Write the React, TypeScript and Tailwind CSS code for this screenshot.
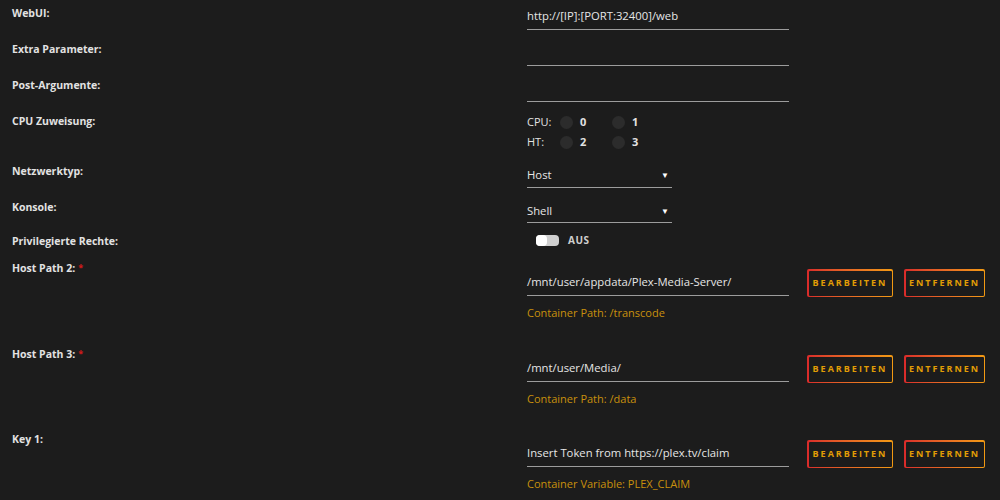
import React from 'react';

const font = { fontFamily: '"Open Sans", "Noto Sans", sans-serif' };

const Label = ({ text, required }: { text: string; required?: boolean }) => (
  <div className="w-[527px] shrink-0 pl-3 pt-[5px] text-[10.5px] leading-4 font-bold text-[#e2e2e2]">
    {text}
    {required && <span className="ml-[3px] align-top text-[9px] text-[#d01a1a]">*</span>}
  </div>
);

const TextRow = ({ label, value }: { label: string; value?: string }) => (
  <div className="flex h-[36px]">
    <Label text={label} />
    <div className="w-[262px] pt-[8px] pb-[5px] border-b border-[#9c9c9c] text-[11.3px] leading-4 text-[#e6e6e6] h-[30px]">
      {value}
    </div>
  </div>
);

const SelectRow = ({ label, value, h, pb }: { label: string; value: string; h: string; pb: string }) => (
  <div className={`flex ${h}`}>
    <Label text={label} />
    <div
      className={`flex w-[145px] h-fit items-center justify-between pt-[9px] ${pb} border-b border-[#9c9c9c] text-[11.3px] leading-4 text-[#e6e6e6]`}
    >
      <span>{value}</span>
      <span className="mr-[3px] text-[8px] text-white">▼</span>
    </div>
  </div>
);

const Radio = ({ n }: { n: string }) => (
  <div className="flex items-center">
    <span className="h-[13px] w-[13px] rounded-full bg-[#2c2c2c]" />
    <span className="ml-[7px] text-[11px] font-bold text-[#e2e2e2]">{n}</span>
  </div>
);

const GradButton = ({ text, w }: { text: string; w: string }) => (
  <div className={`${w} h-[28px] p-[1.5px] rounded-[2px] bg-gradient-to-r from-[#d92a2a] to-[#f29a12]`}>
    <div className="flex h-full w-full items-center justify-center rounded-[1px] bg-[#1c1c1c] text-[9px] font-bold tracking-[2px] text-[#e19d05]">
      {text}
    </div>
  </div>
);

const PathRow = ({
  label,
  value,
  note,
  required,
  h,
}: {
  label: string;
  value: string;
  note: string;
  required?: boolean;
  h: string;
}) => (
  <div className={`flex ${h}`}>
    <Label text={label} required={required} />
    <div className="flex">
      <div className="w-[262px]">
        <div className="pt-[19px] pb-[5px] border-b border-[#9c9c9c] text-[11.3px] leading-4 text-[#e6e6e6]">
          {value}
        </div>
        <div className="mt-[9px] text-[11px] leading-4 text-[#c8900c]">{note}</div>
      </div>
      <div className="ml-[18px] mt-[14px] flex gap-[11px]">
        <GradButton text="BEARBEITEN" w="w-[86px]" />
        <GradButton text="ENTFERNEN" w="w-[81px]" />
      </div>
    </div>
  </div>
);

export default function App() {
  return (
    <div className="h-[500px] w-[1000px] overflow-hidden bg-[#1c1c1c]" style={font}>
      <TextRow label="WebUI:" value="http://[IP]:[PORT:32400]/web" />
      <TextRow label="Extra Parameter:" />
      <TextRow label="Post-Argumente:" />

      <div className="flex h-[50px]">
        <Label text="CPU Zuweisung:" />
        <div className="pt-[4px] text-[11px] text-[#e2e2e2]">
          <div className="flex h-5 items-center">
            <span className="w-[33px]">CPU:</span>
            <div className="w-[52px]">
              <Radio n="0" />
            </div>
            <Radio n="1" />
          </div>
          <div className="flex h-5 items-center">
            <span className="w-[33px]">HT:</span>
            <div className="w-[52px]">
              <Radio n="2" />
            </div>
            <Radio n="3" />
          </div>
        </div>
      </div>

      <SelectRow label="Netzwerktyp:" value="Host" h="h-[36px]" pb="pb-[4px]" />
      <SelectRow label="Konsole:" value="Shell" h="h-[34px]" pb="pb-[3px]" />

      <div className="flex h-[27px]">
        <Label text="Privilegierte Rechte:" />
        <div className="ml-[9px] mt-[7px] flex h-[11px] items-center">
          <div className="relative h-[11px] w-[23px] rounded-[4px] bg-[#cfcfcf]">
            <span className="absolute left-0 top-0 h-[11px] w-[11px] rounded-[4px] bg-white" />
          </div>
          <span className="ml-[9px] text-[10px] font-bold tracking-[0.5px] text-[#cfcfcf]">AUS</span>
        </div>
      </div>

      <PathRow
        label="Host Path 2:"
        required
        value="/mnt/user/appdata/Plex-Media-Server/"
        note="Container Path: /transcode"
        h="h-[86px]"
      />
      <PathRow
        label="Host Path 3:"
        required
        value="/mnt/user/Media/"
        note="Container Path: /data"
        h="h-[85px]"
      />
      <PathRow
        label="Key 1:"
        value="Insert Token from https://plex.tv/claim"
        note="Container Variable: PLEX_CLAIM"
        h="h-[86px]"
      />
    </div>
  );
}
